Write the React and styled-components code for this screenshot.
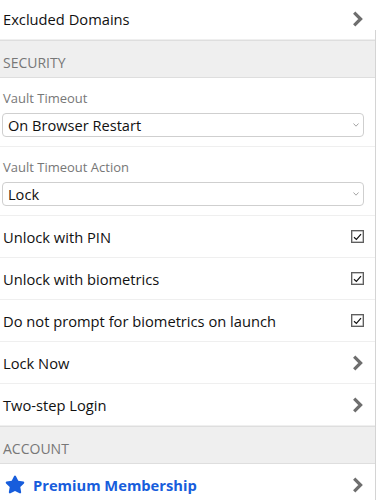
import React from 'react'
import styled, { createGlobalStyle } from 'styled-components'
import { FaStar } from 'react-icons/fa'

const GlobalStyle = createGlobalStyle`
  html, body {
    margin: 0;
    padding: 0;
    background: #ffffff;
  }
  body {
    font-family: "Open Sans", "Noto Sans", sans-serif;
    color: #111111;
    overflow: hidden;
  }
`

const Page = styled.div`
  position: relative;
  width: 378px;
  height: 500px;
  overflow: hidden;
`

const List = styled.div`
  width: 375px;
  margin-top: -2px;
`

const Row = styled.div`
  display: flex;
  align-items: center;
  justify-content: space-between;
  height: 41px;
  padding: 0 12px 0 3px;
  border-bottom: 1px solid #efefef;
  font-size: 14.7px;
  color: ${(p) => (p.accent ? '#175ddc' : '#111111')};
  font-weight: ${(p) => (p.accent ? 700 : 400)};
  &:last-child {
    border-bottom: none;
  }
`

const Label = styled.span`
  display: flex;
  align-items: center;
  gap: 8px;
`

const SectionHeader = styled.div`
  background: #efefef;
  border-top: 1px solid #dedede;
  border-bottom: 1px solid #dedede;
  height: 36px;
  padding: 0 3px;
  display: flex;
  align-items: flex-end;
  font-size: 14px;
  color: #777777;
  text-transform: uppercase;
  line-height: 28px;
`

const Group = styled.div`
  border-bottom: 1px solid #efefef;
  &:last-child {
    border-bottom: none;
  }
`

const Field = styled.div`
  padding: 11px 11px 9px 2px;
  border-bottom: 1px solid #efefef;
`

const FieldLabel = styled.div`
  font-size: 13px;
  line-height: 18px;
  color: #777777;
  padding-left: 1px;
  margin-bottom: 6px;
`

const SelectWrap = styled.div`
  position: relative;
`

const Select = styled.select`
  appearance: none;
  -webkit-appearance: none;
  display: block;
  width: 100%;
  height: 24px;
  padding: 0 20px 0 5px;
  border: 1px solid #cfcfcf;
  border-radius: 4px;
  background: #ffffff;
  font-family: "Open Sans", "Noto Sans", sans-serif;
  font-size: 14.6px;
  color: #111111;
  outline: none;
`

const SelectArrow = styled.svg`
  position: absolute;
  right: 5px;
  top: 10px;
  width: 6px;
  height: 4px;
  pointer-events: none;
`

const ChevronIcon = styled.svg`
  width: 11px;
  height: 16px;
  flex: none;
`

const Box = styled.span`
  display: inline-flex;
  align-items: center;
  justify-content: center;
  width: 11px;
  height: 11px;
  margin-right: -1px;
  border: 1px solid #5f5f5f;
  box-shadow: inset 0 0 0 0.5px #8a8a8a;
  background: #ffffff;
`

const Star = styled(FaStar)`
  width: 20px;
  height: 19px;
  color: #175ddc;
  margin-left: 2px;
`

const Scrollbar = styled.div`
  position: absolute;
  top: 30px;
  right: 0;
  bottom: 0;
  width: 2px;
  border-left: 1px solid #d4d4d4;
  background: #ffffff;
`

const Chevron = () => (
  <ChevronIcon viewBox="0 0 11 16">
    <polyline
      points="2.2,1.6 8.6,8 2.2,14.4"
      fill="none"
      stroke="#6e6e6e"
      strokeWidth="3.2"
      strokeLinejoin="miter"
    />
  </ChevronIcon>
)

const Checkbox = () => (
  <Box>
    <svg width="9" height="8" viewBox="0 0 9 8">
      <polyline points="1,4.2 3.4,6.4 8,1.2" fill="none" stroke="#111" strokeWidth="1.2" />
    </svg>
  </Box>
)

const NavRow = ({ children, accent }) => (
  <Row accent={accent}>
    <Label>{children}</Label>
    <Chevron />
  </Row>
)

const CheckRow = ({ children }) => (
  <Row>
    <Label>{children}</Label>
    <Checkbox />
  </Row>
)

const SelectField = ({ label, value }) => (
  <Field>
    <FieldLabel>{label}</FieldLabel>
    <SelectWrap>
      <Select defaultValue={value}>
        <option>{value}</option>
      </Select>
      <SelectArrow viewBox="0 0 6 4">
        <polyline points="0.5,0.5 3,3.2 5.5,0.5" fill="none" stroke="#9a9a9a" strokeWidth="0.9" />
      </SelectArrow>
    </SelectWrap>
  </Field>
)

export default function App() {
  return (
    <Page>
      <GlobalStyle />
      <List>
        <Group>
          <NavRow>Excluded Domains</NavRow>
        </Group>
        <SectionHeader>Security</SectionHeader>
        <SelectField label="Vault Timeout" value="On Browser Restart" />
        <SelectField label="Vault Timeout Action" value="Lock" />
        <Group>
          <CheckRow>Unlock with PIN</CheckRow>
          <CheckRow>Unlock with biometrics</CheckRow>
          <CheckRow>Do not prompt for biometrics on launch</CheckRow>
          <NavRow>Lock Now</NavRow>
          <NavRow>Two-step Login</NavRow>
        </Group>
        <SectionHeader>Account</SectionHeader>
        <Group>
          <NavRow accent>
            <Star />
            Premium Membership
          </NavRow>
        </Group>
      </List>
      <Scrollbar />
    </Page>
  )
}
